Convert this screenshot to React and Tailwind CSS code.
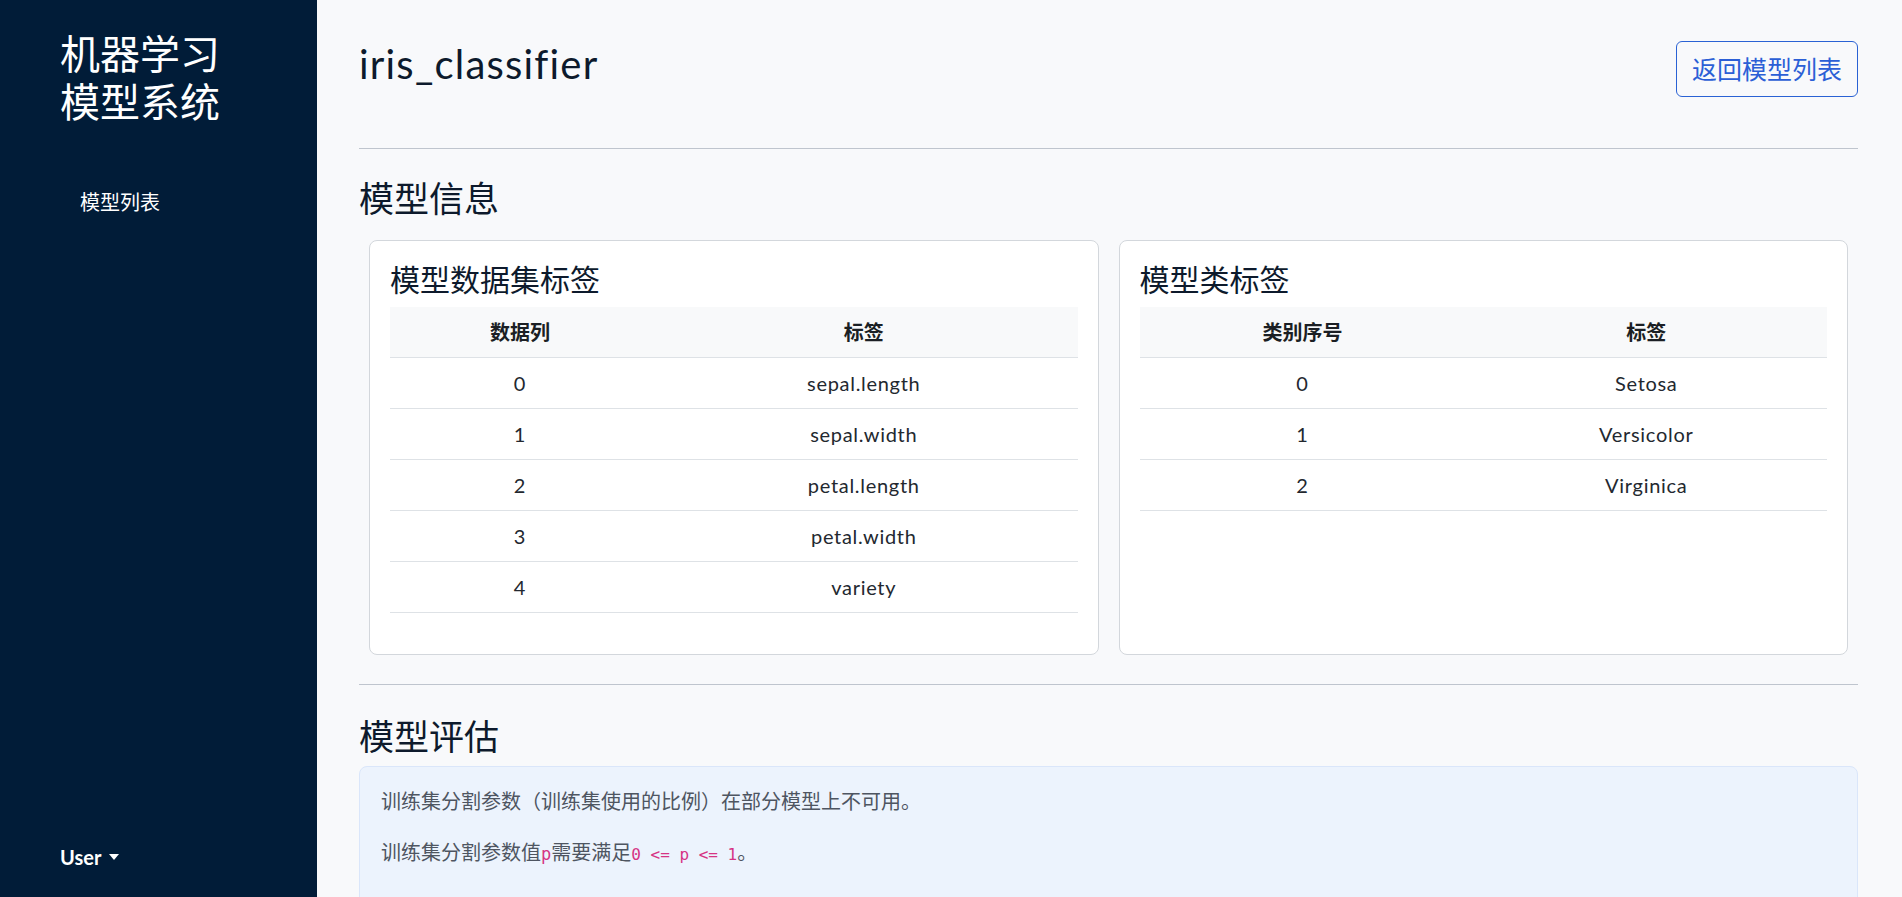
import React from "react";

const latin = "tracking-[0.035em]";

function DataTable({ col1, col1Width, rows }) {
  return (
    <table className="w-full table-fixed border-collapse mb-[20px]">
      <thead>
        <tr className="bg-[#f8f9fa] h-[50px] border-b border-[#dee2e6]">
          <th className={`${col1Width} text-[20px] font-bold text-[#1b1f24] text-center`}>{col1}</th>
          <th className="text-[20px] font-bold text-[#1b1f24] text-center">标签</th>
        </tr>
      </thead>
      <tbody>
        {rows.map((r, i) => (
          <tr key={i} className="h-[51px] border-b border-[#dee2e6]">
            <td className={`text-center text-[20px] text-[#23282f] ${latin}`}>{i}</td>
            <td className={`text-center text-[20px] text-[#23282f] ${latin}`}>{r}</td>
          </tr>
        ))}
      </tbody>
    </table>
  );
}

export default function App() {
  return (
    <div className="flex h-screen w-full overflow-hidden font-['Lato','Noto_Sans_CJK_SC',sans-serif]">
      <aside className="w-[317px] shrink-0 bg-[#011c38] text-white flex flex-col justify-between pl-[60px] pt-[30px] pb-[25px]">
        <div>
          <h2 className="text-[40px] leading-[48px] font-normal">
            机器学习
            <br />
            模型系统
          </h2>
          <nav className="mt-[51px]">
            <a className="block px-[20px] py-[10px] text-[20px] leading-[30px] text-white">模型列表</a>
          </nav>
        </div>
        <div className="flex items-center text-[20px] leading-[30px] font-bold">
          <span>User</span>
          <span className="ml-[8px] inline-block w-0 h-0 border-l-[5px] border-r-[5px] border-t-[6px] border-l-transparent border-r-transparent border-t-white"></span>
        </div>
      </aside>
      <main className="flex-1 bg-[#f8f9fb] pl-[42px] pr-[44px] pt-[41px] overflow-hidden text-[#0d1a2c]">
        <div className="flex justify-between items-start">
          <h2 className="text-[40px] leading-[46px] font-normal tracking-[0.03em]">iris_classifier</h2>
          <button className="h-[56px] px-[15px] border border-[#2a62d4] rounded-[6px] text-[25px] leading-[30px] text-[#2b5fd6] bg-transparent">
            返回模型列表
          </button>
        </div>
        <div className="h-px bg-[#bfc5ce] mt-[51px]"></div>
        <h3 className="text-[35px] leading-[42px] font-normal mt-[28px]">模型信息</h3>
        <div className="grid grid-cols-2 gap-[20px] px-[10px] mt-[21px]">
          <div className="bg-white border border-[#d3d7dc] rounded-[8px] px-[20px] pt-[20px] pb-[21px]">
            <h4 className="text-[30px] leading-[36px] font-normal mb-[10px]">模型数据集标签</h4>
            <DataTable
              col1="数据列"
              col1Width="w-[260px]"
              rows={["sepal.length", "sepal.width", "petal.length", "petal.width", "variety"]}
            />
          </div>
          <div className="bg-white border border-[#d3d7dc] rounded-[8px] px-[20px] pt-[20px] pb-[21px]">
            <h4 className="text-[30px] leading-[36px] font-normal mb-[10px]">模型类标签</h4>
            <DataTable col1="类别序号" col1Width="w-[326px]" rows={["Setosa", "Versicolor", "Virginica"]} />
          </div>
        </div>
        <div className="h-px bg-[#bfc5ce] mt-[29px]"></div>
        <h3 className="text-[35px] leading-[42px] font-normal mt-[30px]">模型评估</h3>
        <div className="mt-[9px] bg-[#ecf3fd] border border-[#dae6fa] rounded-[8px] px-[21px] pt-[19px] pb-[40px] text-[#4e5561]">
          <p className="text-[20px] leading-[30px] mb-[21px]">训练集分割参数（训练集使用的比例）在部分模型上不可用。</p>
          <p className="text-[20px] leading-[30px] mb-[20px]">
            训练集分割参数值
            <code className="font-['DejaVu_Sans_Mono',monospace] text-[17px] text-[#d63384]">p</code>
            需要满足
            <code className="font-['DejaVu_Sans_Mono',monospace] text-[16px] text-[#d63384]">0 &lt;= p &lt;= 1</code>
            。
          </p>
        </div>
      </main>
    </div>
  );
}
